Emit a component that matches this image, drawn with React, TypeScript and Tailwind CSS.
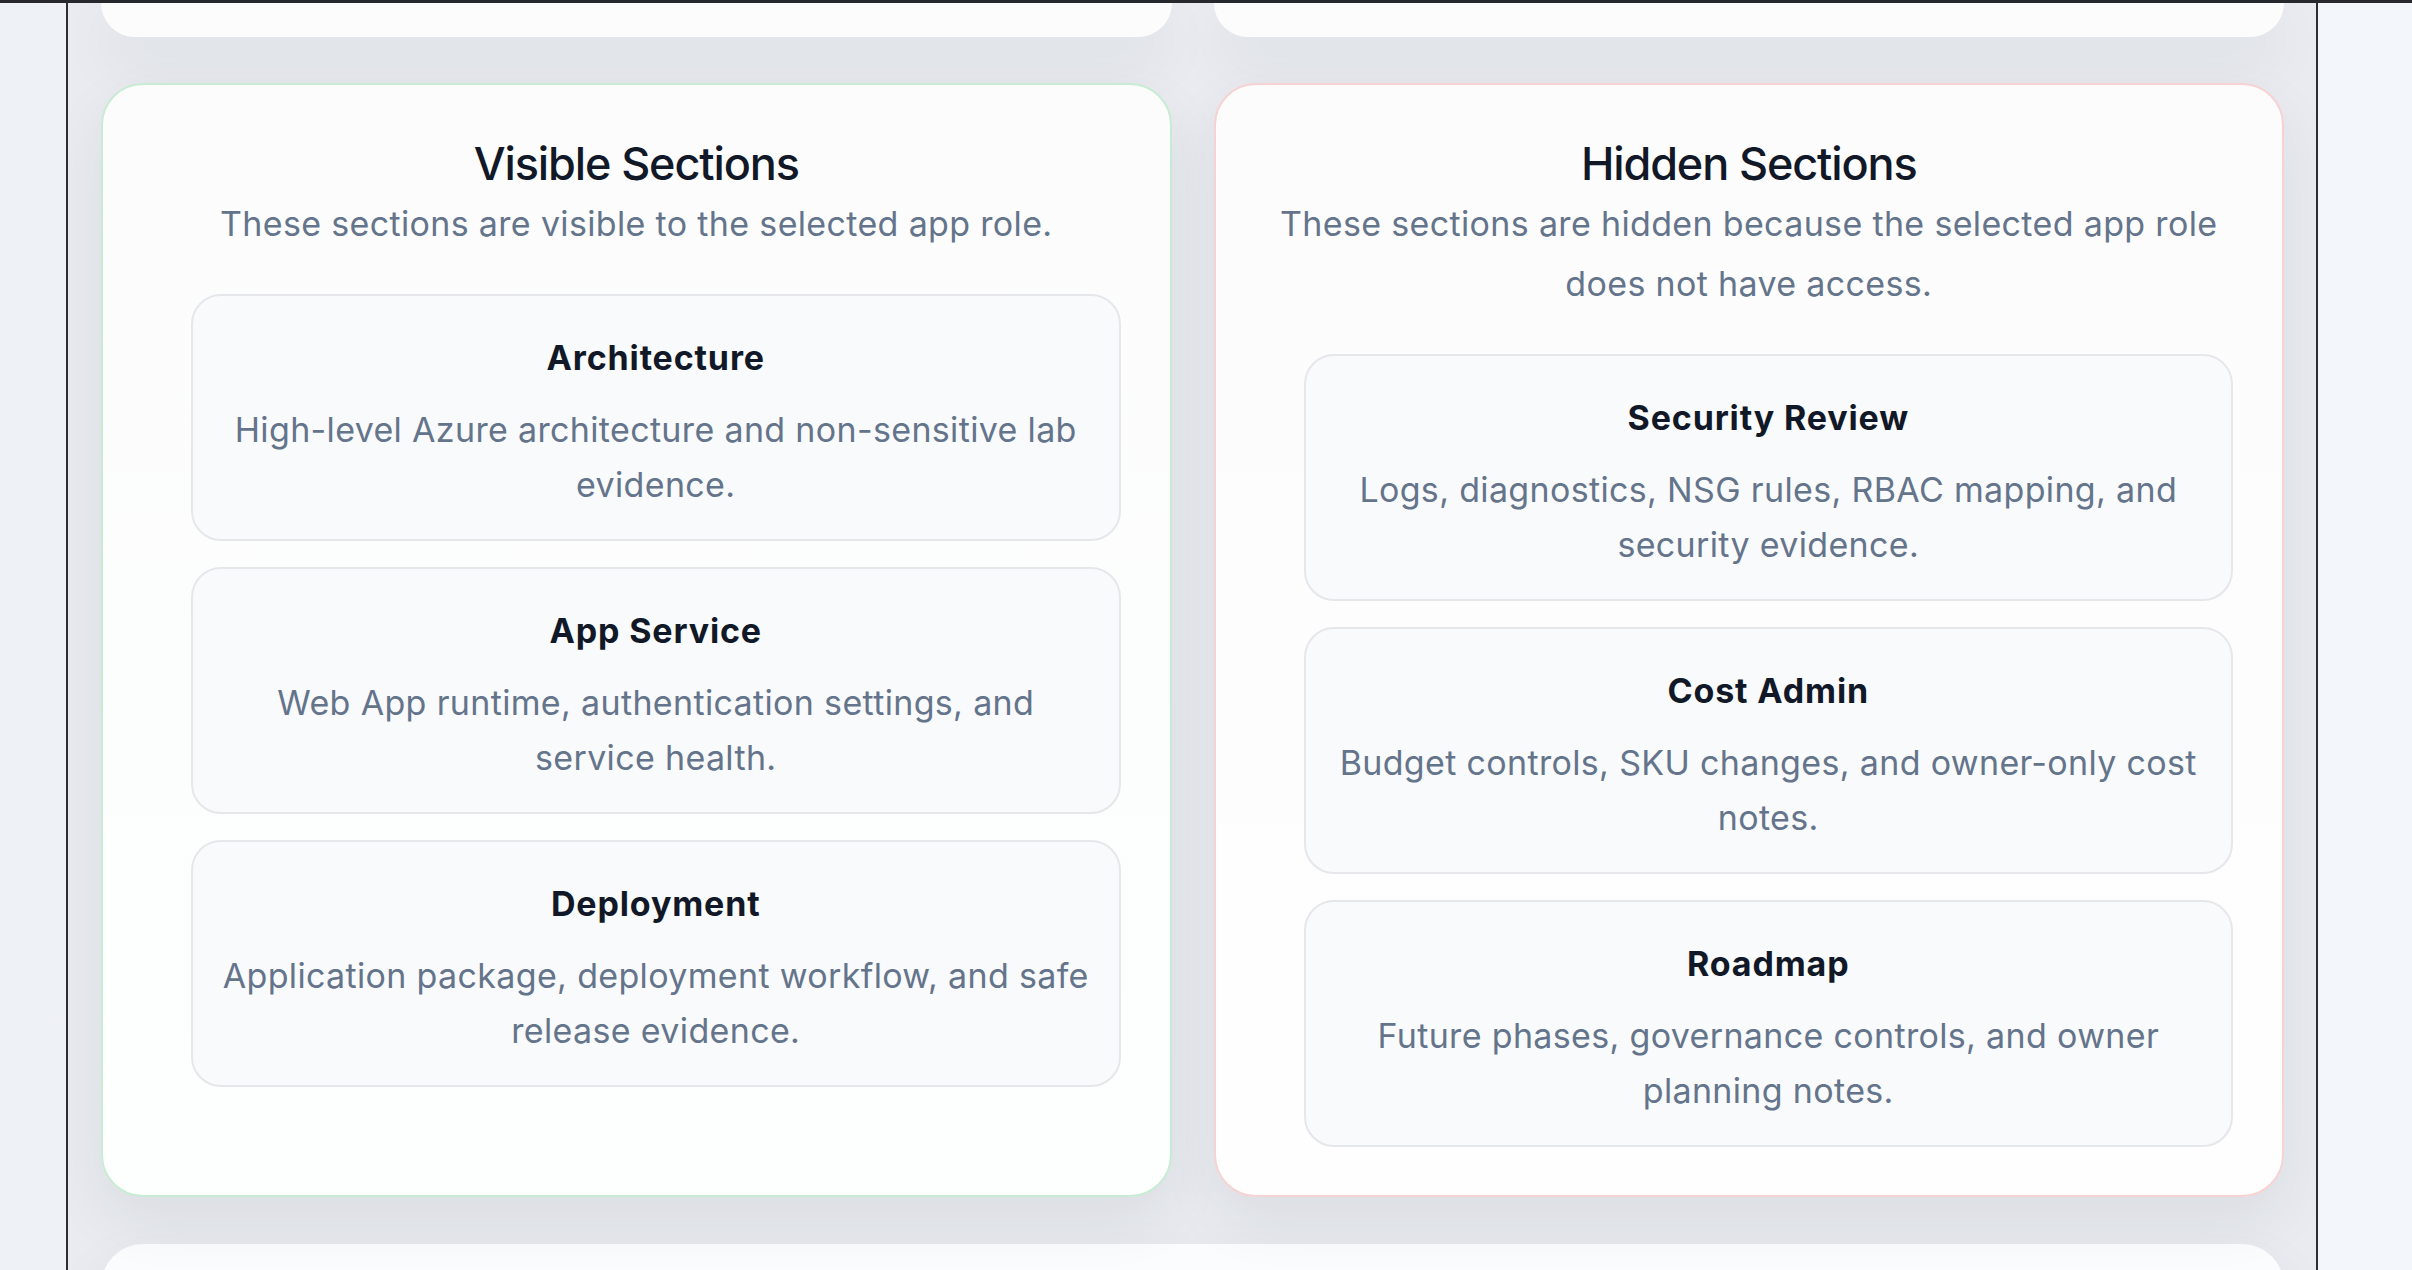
import React from "react";

type Section = {
  title: string;
  description: string;
};

const visibleSections: Section[] = [
  {
    title: "Architecture",
    description: "High-level Azure architecture and non-sensitive lab evidence.",
  },
  {
    title: "App Service",
    description: "Web App runtime, authentication settings, and service health.",
  },
  {
    title: "Deployment",
    description: "Application package, deployment workflow, and safe release evidence.",
  },
];

const hiddenSections: Section[] = [
  {
    title: "Security Review",
    description: "Logs, diagnostics, NSG rules, RBAC mapping, and security evidence.",
  },
  {
    title: "Cost Admin",
    description: "Budget controls, SKU changes, and owner-only cost notes.",
  },
  {
    title: "Roadmap",
    description: "Future phases, governance controls, and owner planning notes.",
  },
];

/* ---------- Section tile ---------- */
function SectionTile({ section }: { section: Section }) {
  return (
    <li className="rounded-[30px] border-2 border-[#e5e7eb] bg-[#f9fafb] px-[28px] pt-[34px] pb-[27px] text-center">
      <h3 className="text-[34px] leading-[55px] font-bold tracking-[0.025em] text-[#111827]">
        {section.title}
      </h3>
      <p className="mt-[17px] text-[34px] leading-[55px] tracking-[0.01em] text-[#64748b]">
        {section.description}
      </p>
    </li>
  );
}

/* ---------- Access panel ---------- */
function AccessPanel({
  title,
  subtitle,
  sections,
  tone,
}: {
  title: string;
  subtitle: string;
  sections: Section[];
  tone: "allowed" | "denied";
}) {
  return (
    <section
      className={`rounded-[42px] border-2 px-[49px] pt-[52px] pb-[48px] shadow-[0_24px_60px_rgba(30,41,59,0.07)] ${
        tone === "allowed"
          ? "border-[#c8ecd3] bg-gradient-to-b from-[#fcfcfd] to-[#fdfefe]"
          : "border-[#f6d2d3] bg-gradient-to-b from-[#fdfcfd] to-[#fefefe]"
      }`}
    >
      <h2 className="text-center text-[45px] leading-[54px] font-medium tracking-[-0.025em] text-[#111827]">
        {title}
      </h2>
      <p className="mt-[3px] text-center text-[34px] leading-[60px] tracking-[0.01em] text-[#64748b]">
        {subtitle}
      </p>
      <ul className="mt-[40px] flex flex-col gap-[26px] pl-[39px]">
        {sections.map((s) => (
          <SectionTile key={s.title} section={s} />
        ))}
      </ul>
    </section>
  );
}

export default function App() {
  return (
    <div
      className="h-[1270px] w-full overflow-hidden bg-gradient-to-r from-[#eef1f6] via-[#f2f4f8] to-[#f3f6fa]"
      style={{ fontFamily: "Inter, 'Noto Sans', sans-serif" }}
    >
      <div className="h-[3px] bg-[#26282d]" />
      <div className="ml-[66px] h-[1267px] w-[2252px] overflow-hidden border-x-2 border-[#2b2e36] bg-[#e9ebf0] pl-[33px] pr-[32px]">
        {/* tail of the cards above */}
        <div className="grid grid-cols-2 gap-[42px]">
          <div className="h-[34px] rounded-b-[40px] bg-[#fcfcfd] shadow-[0_24px_60px_rgba(30,41,59,0.07)]" />
          <div className="h-[34px] rounded-b-[40px] bg-[#fcfcfd] shadow-[0_24px_60px_rgba(30,41,59,0.07)]" />
        </div>

        <div className="mt-[46px] grid grid-cols-2 gap-[42px]">
          <AccessPanel
            title="Visible Sections"
            subtitle="These sections are visible to the selected app role."
            sections={visibleSections}
            tone="allowed"
          />
          <AccessPanel
            title="Hidden Sections"
            subtitle="These sections are hidden because the selected app role does not have access."
            sections={hiddenSections}
            tone="denied"
          />
        </div>

        {/* next card, starts below */}
        <div className="mt-[47px] h-[200px] rounded-t-[42px] bg-[#fbfcfd] shadow-[0_24px_60px_rgba(30,41,59,0.07)]" />
      </div>
    </div>
  );
}
